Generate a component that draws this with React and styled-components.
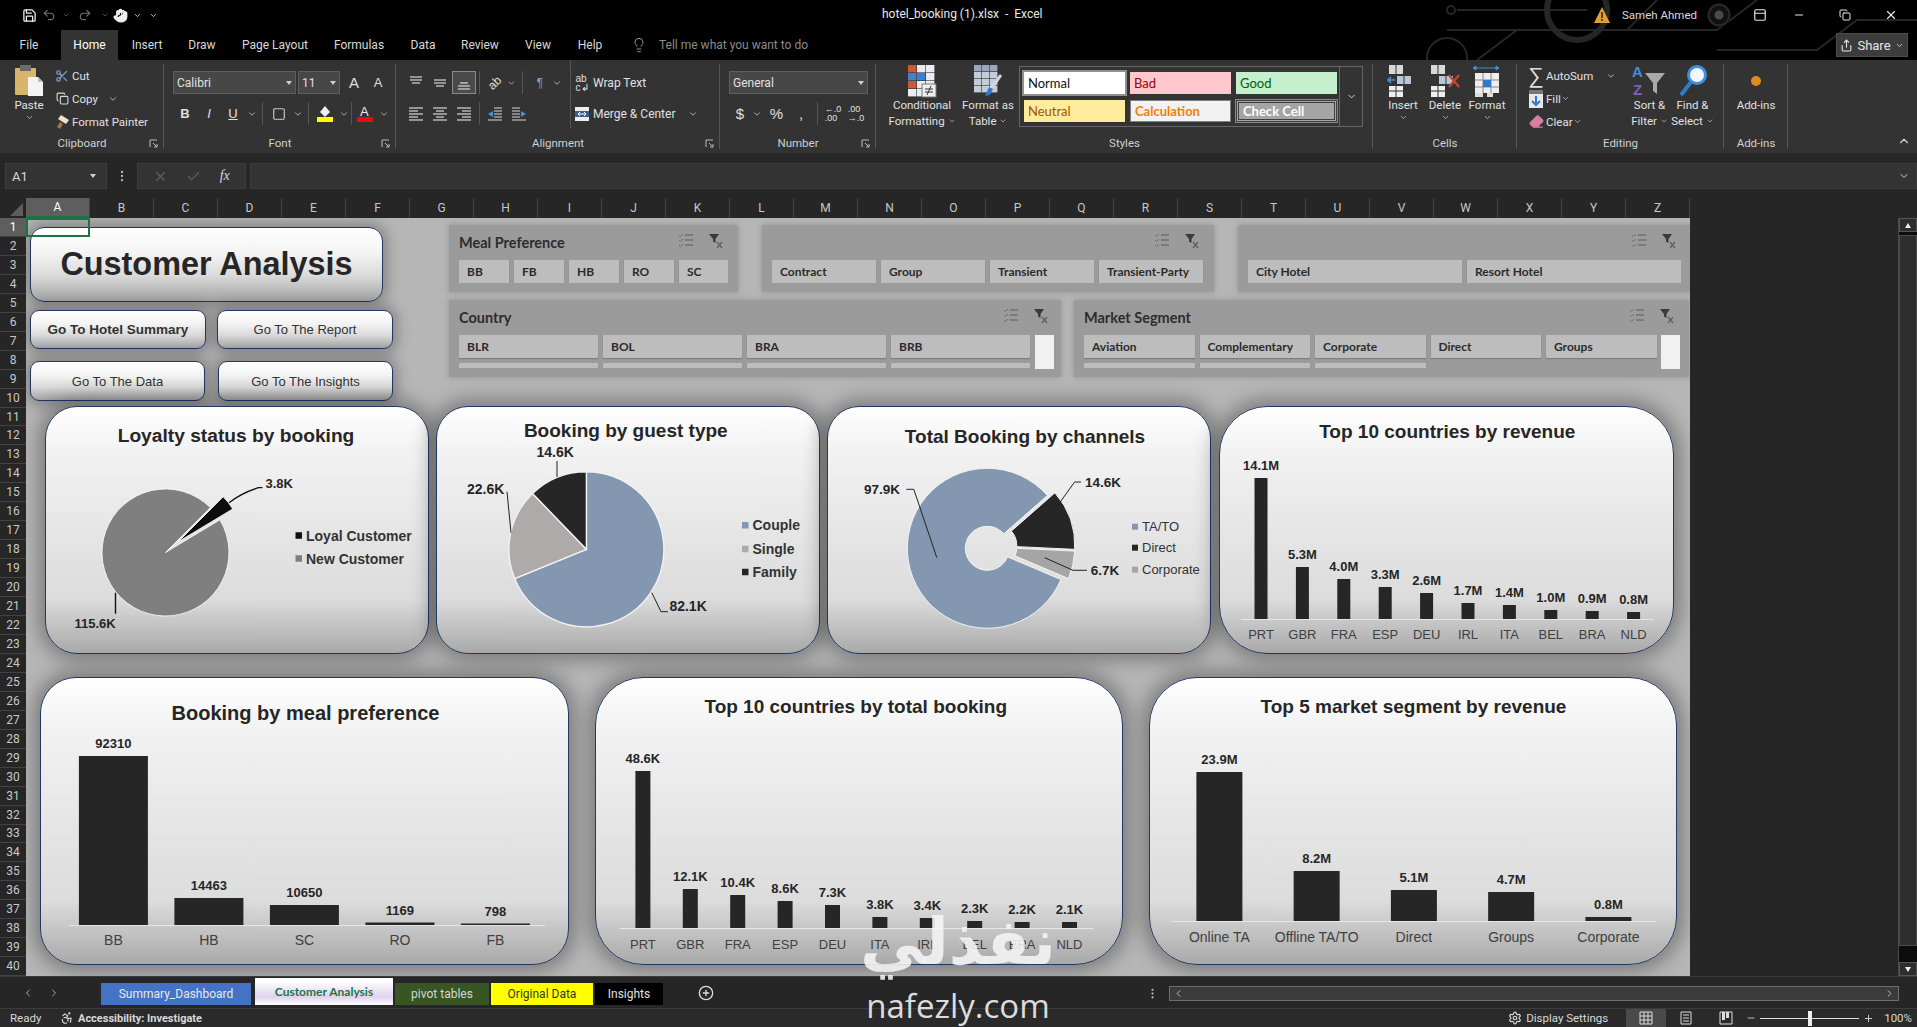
import React from 'react';
import styled, { createGlobalStyle } from 'styled-components';
import {
  ChevronDown, Scissors, Copy, Lightbulb, Save, Undo2, Redo2, X, Check, Minus, Plus,
  Eraser, Hand, Share, Square, ChevronUp, Accessibility, Settings, MoreVertical,
  PanelTop, ArrowDown, ChevronLeft, ChevronRight, CirclePlus,
} from 'lucide-react';

const UI = '"Roboto", "Liberation Sans", sans-serif';
const SLICER = '"Lato", "Liberation Sans", sans-serif';
const CHART = '"Liberation Sans", Arial, sans-serif';

const GlobalStyle = createGlobalStyle`
  html, body { margin: 0; padding: 0; background: #000; overflow: hidden; }
  * { box-sizing: border-box; }
  body { font-family: ${UI}; }
`;

const Window = styled.div`
  position: relative;
  width: 1917px;
  height: 1027px;
  overflow: hidden;
  display: flex;
  flex-direction: column;
  background: #262626;
  color: #d9d9d9;
  font-size: 12px;
`;

/* ---------- title bar + tabs ---------- */
const Header = styled.header`
  position: relative;
  height: 60px;
  background: #000;
`;
const CircuitArt = styled.svg`
  position: absolute;
  right: 0;
  top: 0;
  width: 500px;
  height: 60px;
`;
const TitleRow = styled.div`
  position: relative;
  height: 30px;
  display: flex;
  align-items: center;
`;
const Qat = styled.div`
  display: flex;
  align-items: center;
  padding-left: 21px;
`;
const QatCell = styled.span`
  width: ${p => p.$w}px;
  display: flex;
  align-items: center;
  justify-content: center;
  color: ${p => p.$dim ? '#6e6e6e' : '#f2f2f2'};
`;
const DocTitle = styled.div`
  position: absolute;
  left: 882px;
  top: 7px;
  color: #e8e8e8;
  font-size: 12px;
  white-space: pre;
`;
const TitleRight = styled.div`
  margin-left: auto;
  display: flex;
  align-items: center;
  padding-right: 10px;
`;
const UserName = styled.span`
  color: #d9d9d9;
  margin: 0 10px 0 12px;
  font-size: 11.5px;
`;
const Avatar = styled.span`
  width: 24px;
  height: 24px;
  border-radius: 50%;
  background: radial-gradient(circle at 50% 50%, #4a4a4a 0 4px, #111 5px 9px, #333 10px, #0b0b0b 12px);
  margin-right: 22px;
`;
const WinBtn = styled.span`
  width: ${p => p.$w}px;
  display: flex;
  justify-content: center;
  color: #e8e8e8;
`;
const TabRow = styled.div`
  position: relative;
  height: 30px;
  display: flex;
  align-items: stretch;
`;
const RibbonTab = styled.div`
  width: ${p => p.$w}px;
  margin-left: ${p => p.$ml || 0}px;
  display: flex;
  align-items: center;
  justify-content: center;
  background: ${p => p.$active ? '#333' : 'transparent'};
  color: ${p => p.$active ? '#fff' : '#d9d9d9'};
`;
const TellMe = styled.div`
  display: flex;
  align-items: center;
  gap: 12px;
  margin-left: 17px;
  color: #8a8a8a;
  font-size: 12px;
  & svg { color: #b5b5b5; }
`;
const ShareBtn = styled.div`
  position: absolute;
  left: 1836px;
  top: 3px;
  width: 72px;
  height: 24px;
  background: #3c3c3c;
  border: 1px solid #4c4c4c;
  display: flex;
  align-items: center;
  justify-content: center;
  gap: 4px;
  color: #e6e6e6;
  font-size: 13px;
`;

/* ---------- ribbon ---------- */
const Ribbon = styled.section`
  height: 93px;
  background: #333;
  display: flex;
`;
const Group = styled.div`
  width: ${p => p.$w}px;
  height: 93px;
  flex: none;
  display: flex;
  flex-direction: column;
  position: relative;
  &::after {
    content: '';
    position: absolute;
    right: 0;
    top: 4px;
    bottom: 4px;
    width: 1px;
    background: #555;
  }
`;
const GroupBody = styled.div`
  flex: 1;
  display: flex;
  padding-left: ${p => p.$pl || 0}px;
  padding-top: ${p => p.$pt || 0}px;
`;
const GroupLabel = styled.div`
  height: 18px;
  margin-bottom: 0;
  text-align: center;
  color: #d0d0d0;
  font-size: 11.5px;
  line-height: 16px;
`;
const Launcher = styled.svg`
  position: absolute;
  right: 6px;
  bottom: 5px;
`;
const Big = styled.div`
  width: ${p => p.$w}px;
  flex: none;
  display: flex;
  flex-direction: column;
  align-items: center;
  padding-top: 4px;
  color: #e0e0e0;
  line-height: 16px;
  font-size: 11.5px;
  white-space: nowrap;
`;
const BigIcon = styled.div`
  height: 33px;
  display: flex;
  align-items: center;
  justify-content: center;
`;
const Stack3 = styled.div`
  width: ${p => p.$w}px;
  flex: none;
  padding-top: 4px;
`;
const Row3 = styled.div`
  height: 23px;
  display: flex;
  align-items: center;
  color: #e0e0e0;
  white-space: nowrap;
  font-size: 11.5px;
`;
const Stack2 = styled.div`
  width: ${p => p.$w ? p.$w + 'px' : 'auto'};
  flex: none;
  padding-top: 11px;
  display: flex;
  flex-direction: column;
  gap: 8px;
  border-right: ${p => p.$rule ? '1px solid #555' : 'none'};
  height: ${p => p.$rule ? '68px' : 'auto'};
`;
const Row2 = styled.div`
  height: 23px;
  display: flex;
  align-items: center;
  color: #e0e0e0;
  white-space: nowrap;
  font-size: 12px;
`;
const Cell = styled.span`
  width: ${p => p.$w}px;
  height: 23px;
  flex: none;
  display: flex;
  align-items: center;
  justify-content: center;
  color: #dcdcdc;
  border: ${p => p.$on ? '1px solid #8a8a8a' : 'none'};
  background: ${p => p.$on ? '#4a4a4a' : 'transparent'};
`;
const Rule = styled.span`
  width: ${p => p.$w}px;
  height: 23px;
  flex: none;
  display: flex;
  justify-content: center;
  &::before { content: ''; width: 1px; background: #555; }
`;
const Select = styled.div`
  width: ${p => p.$w}px;
  height: 23px;
  margin-right: 2px;
  flex: none;
  display: flex;
  align-items: center;
  justify-content: space-between;
  padding: 0 3px;
  background: #474747;
  border: 1px solid #5e5e5e;
  color: #e2e2e2;
  font-size: 12px;
`;
const Caret = styled.span`
  width: 0;
  height: 0;
  border-left: 3px solid transparent;
  border-right: 3px solid transparent;
  border-top: 4px solid #cfcfcf;
`;
const FontGlyph = styled.span`
  font-family: ${CHART};
  font-size: ${p => p.$size || 13}px;
  font-weight: ${p => p.$bold ? 700 : 400};
  font-style: ${p => p.$italic ? 'italic' : 'normal'};
  text-decoration: ${p => p.$under ? 'underline' : 'none'};
  color: #e0e0e0;
`;
const Gallery = styled.div`
  width: 321px;
  height: 61px;
  margin-top: 6px;
  flex: none;
  border: 1px solid #666;
  padding: 5px 4px;
  display: grid;
  grid-template-columns: repeat(3, 101px);
  grid-auto-rows: 22px;
  gap: 6px 5px;
`;
const STYLE_CELLS = {
  normal: 'background:#fff;color:#111;outline:2px solid #8f8f8f;',
  bad: 'background:#ffc7ce;color:#9c0006;',
  good: 'background:#c6efce;color:#006100;',
  neutral: 'background:#ffeb9c;color:#9c5700;',
  calc: 'background:#f2f2f2;color:#fa7d00;border:1px solid #7f7f7f;font-weight:700;',
  check: 'background:#a5a5a5;color:#fff;border:3px double #3f3f3f;outline:1px solid #888;font-weight:700;',
};
const StyleCell = styled.div`
  display: flex;
  align-items: center;
  padding-left: 4px;
  font-family: ${SLICER};
  font-size: 13px;
  ${p => STYLE_CELLS[p.$kind]}
`;
const GalleryMore = styled.div`
  width: 23px;
  height: 61px;
  margin-top: 6px;
  flex: none;
  border: 1px solid #666;
  border-left: none;
  display: flex;
  align-items: center;
  justify-content: center;
  color: #ddd;
`;
const RibbonCollapse = styled.div`
  margin-left: auto;
  align-self: flex-end;
  padding: 0 6px 2px 0;
  color: #ccc;
`;

/* ---------- formula bar ---------- */
const FormulaBar = styled.div`
  height: 45px;
  background: #262626;
  padding: 10px 0 9px 5px;
  display: flex;
  align-items: stretch;
`;
const NameBox = styled.div`
  width: 102px;
  background: #333;
  border: 1px solid #3c3c3c;
  display: flex;
  align-items: center;
  justify-content: space-between;
  padding: 0 10px 0 6px;
  color: #d8d8d8;
  font-size: 13px;
`;
const FxDots = styled.div`
  width: 30px;
  display: flex;
  align-items: center;
  justify-content: center;
  color: #b8b8b8;
`;
const FxBox = styled.div`
  width: 109px;
  background: #333;
  border: 1px solid #3c3c3c;
  display: flex;
  align-items: center;
  justify-content: space-around;
  padding: 0 6px;
  color: #5f5f5f;
`;
const FxText = styled.span`
  font-family: "Liberation Serif", serif;
  font-style: italic;
  font-size: 14px;
  color: #d8d8d8;
`;
const FormulaInput = styled.div`
  flex: 1;
  margin-left: 4px;
  background: #333;
  border: 1px solid #3c3c3c;
  display: flex;
  align-items: center;
  justify-content: flex-end;
  padding-right: 6px;
  color: #ccc;
`;

/* ---------- grid ---------- */
const ColHeader = styled.div`
  height: 20px;
  display: flex;
  background: #262626;
`;
const Corner = styled.div`
  width: 26px;
  display: flex;
  justify-content: flex-end;
  align-items: flex-end;
  padding: 0 3px 2px 0;
  &::before {
    content: '';
    border-left: 13px solid transparent;
    border-bottom: 13px solid #5c5c5c;
  }
`;
const ColCell = styled.div`
  width: 64px;
  display: flex;
  align-items: center;
  justify-content: center;
  border-right: 1px solid #424242;
  background: ${p => p.$active ? '#5e5e5e' : 'transparent'};
  color: ${p => p.$active ? '#fff' : '#c8c8c8'};
  border-bottom: ${p => p.$active ? '2px solid #1e7145' : 'none'};
  font-size: 12px;
`;
const GridBody = styled.div`
  height: 758px;
  display: flex;
`;
const RowHeader = styled.div`
  width: 26px;
  flex: none;
  display: flex;
  flex-direction: column;
  background: #262626;
`;
const RowCell = styled.div`
  flex: 1;
  display: flex;
  align-items: center;
  justify-content: center;
  border-bottom: 1px solid #424242;
  background: ${p => p.$active ? '#5e5e5e' : 'transparent'};
  color: ${p => p.$active ? '#fff' : '#c8c8c8'};
  font-size: 12px;
`;
const Sheet = styled.main`
  position: relative;
  width: 1664px;
  flex: none;
  background: #b6b6b6;
  overflow: hidden;
  padding-top: 7px;
`;
const ActiveCell = styled.div`
  position: absolute;
  left: 0;
  top: 0;
  width: 64px;
  height: 19px;
  border: 2px solid #1e7145;
`;
const DarkGutter = styled.div`
  flex: 1;
  background: #262626;
  border-right: 1px solid #4a4a4a;
`;
const VScroll = styled.div`
  width: 18px;
  flex: none;
  display: flex;
  flex-direction: column;
  background: #0c0c0c;
  color: #ddd;
`;
const VArrow = styled.div`
  height: 14px;
  background: #2e2e2e;
  border: 1px solid #555;
  display: flex;
  align-items: center;
  justify-content: center;
  &::before {
    content: '';
    border-left: 3px solid transparent;
    border-right: 3px solid transparent;
    ${p => p.$up ? 'border-bottom: 5px solid #eee;' : 'border-top: 5px solid #eee;'}
  }
`;
const VThumb = styled.div`
  height: 711px;
  margin-top: 3px;
  background: #2e2e2e;
  border: 1px solid #4c4c4c;
`;
const VSpace = styled.div`
  flex: 1;
`;

/* ---------- dashboard top ---------- */
const TopZone = styled.div`
  display: grid;
  grid-template-columns: 363px 1fr;
  column-gap: 56px;
  padding-left: 4px;
  height: 176px;
`;
const NavColumn = styled.div`
  padding-top: 2px;
  display: flex;
  flex-direction: column;
`;
const BEVEL = `
  background: linear-gradient(180deg, #ffffff 0%, #f3f3f3 35%, #dadada 65%, #a2a2a2 100%);
  border: 1.5px solid #1f3864;
  box-shadow: 0 0 14px 4px rgba(0, 0, 0, 0.28);
`;
const TitleCard = styled.div`
  ${BEVEL}
  width: 353px;
  height: 75px;
  border-radius: 14px;
  display: flex;
  align-items: center;
  justify-content: center;
  font-family: ${CHART};
  font-weight: 700;
  font-size: 32.4px;
  color: #262626;
  margin-bottom: 8px;
`;
const NavRow = styled.div`
  display: flex;
  gap: ${p => p.$gap}px;
  margin-bottom: 12px;
`;
const NavBtn = styled.div`
  ${BEVEL}
  width: ${p => p.$w}px;
  height: ${p => p.$h}px;
  border-radius: 9px;
  display: flex;
  align-items: center;
  justify-content: center;
  font-family: ${CHART};
  font-size: ${p => p.$bold ? 13.5 : 13}px;
  font-weight: ${p => p.$bold ? 700 : 400};
  color: #333;
`;
const SlicerZone = styled.div`
  display: flex;
  flex-direction: column;
  gap: 8px;
`;
const SlicerRow = styled.div`
  display: flex;
  gap: ${p => p.$gap}px;
`;
const Slicer = styled.section`
  position: relative;
  width: ${p => p.$w}px;
  height: ${p => p.$h}px;
  background: #9b9b9b;
  padding: 0 10px;
  box-shadow: 0 0 6px rgba(80, 80, 80, 0.35);
`;
const SlicerHead = styled.div`
  height: 35px;
  display: flex;
  align-items: center;
  font-family: ${SLICER};
  font-weight: 700;
  font-size: 14.5px;
  color: #2d2d2d;
`;
const SlicerTools = styled.div`
  position: absolute;
  top: ${p => p.$top}px;
  right: ${p => p.$right}px;
  display: flex;
  gap: ${p => p.$gap}px;
`;
const ItemGrid = styled.div`
  height: ${p => p.$h}px;
  overflow: hidden;
  display: grid;
  grid-template-columns: repeat(${p => p.$cols}, ${p => p.$itemW}px);
  grid-auto-rows: 23px;
  gap: 5px;
`;
const SlicerItem = styled.div`
  background: #bdbdbd;
  box-shadow: 0 1px 1px rgba(90, 90, 90, 0.45);
  display: flex;
  align-items: center;
  padding-left: 8px;
  font-family: ${SLICER};
  font-weight: 700;
  font-size: 12px;
  color: #2b2b2b;
  white-space: nowrap;
`;
const SliceScroll = styled.div`
  position: absolute;
  right: ${p => p.$right}px;
  top: 35px;
  width: 19px;
  height: 34px;
  background: #f1f1f1;
`;

/* ---------- charts ---------- */
const ChartRow = styled.div`
  display: flex;
  gap: ${p => p.$gap}px;
  padding-left: ${p => p.$pl}px;
  margin-bottom: ${p => p.$mb || 0}px;
`;
const Card = styled.article`
  width: ${p => p.$w}px;
  height: ${p => p.$h}px;
  flex: none;
  border-radius: ${p => p.$r}px;
  border: 1.5px solid #1f3864;
  background: linear-gradient(180deg, #ffffff 0%, #f2f2f2 18%, #e4e4e4 55%, #dcdcdc 78%, #a9a9a9 100%);
  box-shadow: 0 0 18px 7px rgba(0, 0, 0, 0.3);
  display: grid;
  overflow: hidden;
`;
const ChartTitle = styled.h3`
  grid-area: 1 / 1;
  justify-self: center;
  align-self: start;
  margin: ${p => p.$top}px 0 0 ${p => p.$dx || 0}px;
  font-family: ${CHART};
  font-weight: 700;
  font-size: ${p => p.$size}px;
  line-height: 24px;
  color: #262626;
  white-space: nowrap;
  z-index: 1;
`;
const Plot = styled.svg`
  grid-area: 1 / 1;
  display: block;
`;
const ChartText = styled.text`
  font-family: ${CHART};
  font-size: ${p => p.$size || 13}px;
  font-weight: ${p => p.$bold ? 700 : 400};
  fill: ${p => p.$fill || '#262626'};
`;

/* ---------- sheet tabs + status bar ---------- */
const SheetTabs = styled.div`
  height: 32px;
  background: #262626;
  display: flex;
  align-items: center;
  position: relative;
  border-top: 1px solid #3c3c3c;
`;
const TabNav = styled.div`
  width: 101px;
  display: flex;
  align-items: center;
  gap: 14px;
  padding-left: 22px;
  color: #a8a8a8;
`;
const SheetTab = styled.div`
  width: ${p => p.$w}px;
  height: ${p => p.$active ? 27 : 22}px;
  margin: ${p => p.$active ? '-2px 2px 0' : '2px 2px 0 0'};
  background: ${p => p.$bg};
  color: ${p => p.$color};
  font-weight: ${p => p.$active ? 700 : 400};
  font-family: ${p => p.$active ? SLICER : UI};
  display: flex;
  align-items: center;
  justify-content: center;
  font-size: 12px;
`;
const AddSheet = styled.div`
  margin-left: 33px;
  display: flex;
  color: #dcdcdc;
`;
const HScrollZone = styled.div`
  position: absolute;
  left: 1146px;
  right: 18px;
  top: 8px;
  height: 16px;
  display: flex;
  align-items: center;
  color: #c8c8c8;
`;
const HScroll = styled.div`
  flex: 1;
  margin-left: 10px;
  height: 15px;
  background: #3b3b3b;
  border: 1px solid #6d6d6d;
  display: flex;
  align-items: center;
  justify-content: space-between;
  padding: 0 3px;
`;
const StatusBar = styled.footer`
  flex: 1;
  background: #2a2a2a;
  border-top: 1px solid #3c3c3c;
  display: flex;
  align-items: center;
  color: #d8d8d8;
  font-size: 11.5px;
`;
const Ready = styled.span`
  margin-left: 10px;
  width: 50px;
`;
const AccessText = styled.span`
  margin-left: 4px;
  font-weight: 700;
  font-size: 11px;
`;
const StatusRight = styled.div`
  margin-left: auto;
  height: 100%;
  display: flex;
  align-items: center;
`;
const ViewBtn = styled.span`
  width: 40px;
  height: 100%;
  display: flex;
  align-items: center;
  justify-content: center;
  background: ${p => p.$on ? '#4a4a4a' : 'transparent'};
`;
const Zoom = styled.div`
  width: 99px;
  height: 1px;
  background: #ddd;
  position: relative;
  margin: 0 4px;
  &::after {
    content: '';
    position: absolute;
    left: 48px;
    top: -7px;
    width: 4px;
    height: 15px;
    background: #eee;
  }
`;
const Watermark = styled.div`
  position: absolute;
  left: 848px;
  top: 898px;
  width: 220px;
  text-align: center;
  color: rgba(245, 245, 245, 0.88);
  pointer-events: none;
`;
const WatermarkAr = styled.div`
  font-family: "DejaVu Sans", sans-serif;
  font-weight: 700;
  font-size: 64px;
  line-height: 88px;
`;
const WatermarkEn = styled.div`
  font-family: "Open Sans", sans-serif;
  font-size: 33px;
  line-height: 40px;
  color: #dcdcdc;
`;

/* ---------- small drawings ---------- */
const Chev = ({ s = 10 }) => <ChevronDown size={s} strokeWidth={2} color="#c8c8c8" />;

const LinesIcon = ({ rows, w = 16, h = 14 }) => (
  <svg width={w} height={h} viewBox="0 0 16 14">
    {rows.map(([x1, x2, y], i) => <path key={i} d={`M${x1} ${y}H${x2}`} stroke="#d8d8d8" strokeWidth="1.2" />)}
  </svg>
);
const ALIGN = {
  top: [[2, 14, 1], [2, 14, 4], [4, 12, 7]],
  mid: [[2, 14, 4], [2, 14, 7], [4, 12, 10]],
  bottom: [[4, 12, 7], [2, 14, 10], [2, 14, 13]],
  left: [[1, 15, 1], [1, 10, 4], [1, 15, 7], [1, 10, 10], [1, 15, 13]],
  center: [[1, 15, 1], [4, 12, 4], [1, 15, 7], [4, 12, 10], [1, 15, 13]],
  right: [[1, 15, 1], [6, 15, 4], [1, 15, 7], [6, 15, 10], [1, 15, 13]],
};
const IndentIcon = ({ flip }) => (
  <svg width="16" height="14" viewBox="0 0 16 14" style={flip ? { transform: 'scaleX(-1)' } : undefined}>
    <path d="M7 1h8M7 4h8M7 7h8M7 10h8M1 13h14" stroke="#d8d8d8" strokeWidth="1.1" />
    <path d="M6 4v6L1 7z" fill="#4a90d9" />
  </svg>
);
const ClipIcon = () => (
  <svg width="30" height="33" viewBox="0 0 30 33">
    <rect x="1" y="4" width="21" height="27" rx="1" fill="#d9b56a" />
    <rect x="6" y="1" width="11" height="6" fill="#6b6b6b" />
    <path d="M14 13h10l5 5v14H14z" fill="#f4f4f4" />
    <path d="M24 13v5h5" fill="#bdbdbd" />
  </svg>
);
const PainterIcon = () => (
  <svg width="16" height="16" viewBox="0 0 16 16">
    <path d="M7 1l8 5-3 4-8-5z" fill="#f0e2c8" />
    <path d="M6 8l3 2-3 5-3-2z" fill="#a8743a" />
  </svg>
);
const CondIcon = () => (
  <svg width="30" height="34" viewBox="0 0 30 34">
    {[0, 1, 2, 3].map(r => [0, 1, 2].map(c => (
      <rect key={`${r}${c}`} x={c * 9 + 1} y={r * 8 + 1} width="8.4" height="7.4"
        fill={c === 0 && r < 3 ? (r === 1 ? '#4a7fc7' : '#c75b3a') : c === 1 && r === 1 ? '#3f7fd0' : '#e9edf2'} />
    )))}
    <rect x="15" y="20" width="14" height="13" fill="#efefef" stroke="#777" />
    <path d="M18 25h8M18 28h8M24 22l-4 9" stroke="#333" fill="none" />
  </svg>
);
const TableIcon = () => (
  <svg width="30" height="34" viewBox="0 0 30 34">
    {[0, 1, 2, 3].map(r => [0, 1, 2].map(c => (
      <rect key={`${r}${c}`} x={c * 8 + 1} y={r * 7 + 1} width="7.4" height="6.4" fill={r === 0 ? '#9aa7bd' : '#c3ccd9'} />
    )))}
    <path d="M27 10l2 2-9 13-4-2z" fill="#d5d5d5" />
    <path d="M16 23l4 2-3 6-5 1z" fill="#2f7ad1" />
  </svg>
);
const CellsIcon = ({ kind }) => (
  <svg width="34" height="34" viewBox="0 0 34 34">
    {kind !== 'format' && (
      <>
        <rect x="3" y="1" width="14" height="9" fill="#d8d8d8" /><path d="M10 1v9" stroke="#333" />
        <rect x="3" y="22" width="14" height="11" fill="#eee" /><path d="M10 22v11M3 27h14" stroke="#333" />
        <rect x="11" y="12" width="14" height="8" fill="#b8c6d8" /><path d="M18 12v8" stroke="#333" />
      </>
    )}
    {kind === 'insert' && <path d="M9 16H2M5 13l-3 3 3 3" stroke="#4a90d9" strokeWidth="1.6" fill="none" />}
    {kind === 'delete' && <path d="M21 11l10 12M31 11L21 23" stroke="#c0452f" strokeWidth="2.4" />}
    {kind === 'format' && (
      <>
        <path d="M3 4h26M3 4l3-2v4zM29 4l-3-2v4z" stroke="#3f8fe0" strokeWidth="1" fill="#3f8fe0" />
        <rect x="5" y="9" width="24" height="20" fill="#eee" />
        <path d="M13 9v20M21 9v20M5 16h24M5 23h24" stroke="#888" />
        <rect x="13" y="16" width="8" height="7" fill="#2f7ad1" />
        <path d="M5 29h8v4H5zM17 29h6v4h-6z" fill="#ddd" />
      </>
    )}
  </svg>
);
const SortIcon = () => (
  <svg width="38" height="34" viewBox="0 0 38 34">
    <text x="1" y="13" fontFamily={CHART} fontSize="15" fill="#3f8fe0" fontWeight="700">A</text>
    <text x="2" y="31" fontFamily={CHART} fontSize="15" fill="#7e62b3" fontWeight="700">Z</text>
    <path d="M14 9h20l-8 10v11l-4-3v-8z" fill="#a9a9a9" />
  </svg>
);
const FindIcon = () => (
  <svg width="30" height="34" viewBox="0 0 30 34">
    <circle cx="19" cy="11" r="8.5" fill="#f2f6fb" stroke="#3f8fe0" strokeWidth="3" />
    <path d="M13 18L3 31" stroke="#2f7ad1" strokeWidth="4" />
  </svg>
);
const FillIcon = () => (
  <svg width="16" height="20" viewBox="0 0 16 20">
    <rect x="1" y="1" width="14" height="18" fill="#e8e8e8" />
    <rect x="1" y="1" width="14" height="4" fill="#777" />
    <path d="M8 7v9M4 12l4 4 4-4" stroke="#2f7ad1" strokeWidth="2" fill="none" />
  </svg>
);
const SlicerIcons = () => (
  <>
    <svg width="16" height="15" viewBox="0 0 16 15">
      <path d="M7 2h8M7 7h8M7 12h8" stroke="#5c5c5c" strokeWidth="1.2" />
      <path d="M1 2l1.5 1.5L5 1M1 7l1.5 1.5L5 6M1 12l1.5 1.5L5 11" stroke="#6f6f6f" fill="none" />
    </svg>
    <svg width="16" height="16" viewBox="0 0 16 16">
      <path d="M1 1h10L7.5 6v4L5 8.5V6z" fill="#3a3a3a" />
      <path d="M9 9l5 6M14 9l-5 6" stroke="#606060" strokeWidth="1.3" />
    </svg>
  </>
);
const LauncherIcon = () => (
  <Launcher width="9" height="9" viewBox="0 0 9 9">
    <path d="M1 8V1h7M4 4l4 4M8 5v3H5" stroke="#bbb" fill="none" />
  </Launcher>
);

/* ---------- pie helpers ---------- */
const polar = (cx, cy, r, a) => [cx + r * Math.sin(a * Math.PI / 180), cy - r * Math.cos(a * Math.PI / 180)];
const slice = (cx, cy, r, r0, a0, a1) => {
  const large = a1 - a0 > 180 ? 1 : 0;
  const [x0, y0] = polar(cx, cy, r, a0);
  const [x1, y1] = polar(cx, cy, r, a1);
  if (!r0) return `M${cx} ${cy}L${x0} ${y0}A${r} ${r} 0 ${large} 1 ${x1} ${y1}Z`;
  const [x2, y2] = polar(cx, cy, r0, a1);
  const [x3, y3] = polar(cx, cy, r0, a0);
  return `M${x0} ${y0}A${r} ${r} 0 ${large} 1 ${x1} ${y1}L${x2} ${y2}A${r0} ${r0} 0 ${large} 0 ${x3} ${y3}Z`;
};

const Legend = ({ x, items, bold, size, swatch = 6.5 }) => items.map(it => (
  <g key={it.text}>
    <rect x={x} y={it.y - swatch / 2} width={swatch} height={swatch} fill={it.color} />
    <ChartText x={x + swatch + 4} y={it.y + size * 0.36} $bold={bold} $size={size} $fill="#333">{it.text}</ChartText>
  </g>
));

const LoyaltyPlot = () => (
  <Plot width="384" height="248" viewBox="44.5 406 384 248">
    <path d={slice(164, 551.5, 63.5, 0, 59, 405)} fill="#7f7f7f" stroke="#fff" strokeWidth="0.8" />
    <path d={slice(176.8, 540.7, 63.5, 0, 45, 59)} fill="#0d0d0d" stroke="#fff" strokeWidth="0.8" />
    <path d="M227.6 501.7 Q240 492 257 486.7H261" stroke="#111" strokeWidth="1.3" fill="none" />
    <path d="M114 591.7V612.7" stroke="#111" strokeWidth="1.4" />
    <ChartText x="264" y="487" $bold $size="13">3.8K</ChartText>
    <ChartText x="73" y="626.5" $bold $size="13">115.6K</ChartText>
    <Legend x={294} bold size={14} items={[
      { text: 'Loyal Customer', y: 534.5, color: '#111' },
      { text: 'New Customer', y: 557.5, color: '#7f7f7f' },
    ]} />
  </Plot>
);

const GuestPlot = () => (
  <Plot width="383.5" height="248" viewBox="436 406 383.5 248">
    <path d={slice(585.4, 548.3, 77.5, 0, 0, 247.8)} fill="#8497b0" stroke="#f2f2f2" strokeWidth="1.4" />
    <path d={slice(585.4, 548.3, 77.5, 0, 247.8, 316)} fill="#aeaaaa" stroke="#f2f2f2" strokeWidth="1.4" />
    <path d={slice(585.4, 548.3, 77.5, 0, 316, 360)} fill="#262626" stroke="#f2f2f2" strokeWidth="1.4" />
    <path d="M556 460V476M506 490.7L510 531.7M650.8 591.7L660 610.7H667" stroke="#222" strokeWidth="1" fill="none" />
    <ChartText x="535.5" y="456" $bold $size="14">14.6K</ChartText>
    <ChartText x="466" y="493" $bold $size="14">22.6K</ChartText>
    <ChartText x="668.4" y="610" $bold $size="14">82.1K</ChartText>
    <Legend x={741} bold size={14} items={[
      { text: 'Couple', y: 524.3, color: '#8497b0' },
      { text: 'Single', y: 548, color: '#aeaaaa' },
      { text: 'Family', y: 571, color: '#262626' },
    ]} />
  </Plot>
);

const ChannelPlot = () => (
  <Plot width="384" height="248" viewBox="826 406 384 248">
    <path d={slice(985.3, 547.3, 80, 22, 113, 408.7)} fill="#8497b0" stroke="#f2f2f2" strokeWidth="1" />
    <path d={slice(992.8, 544.6, 80, 22, 48.7, 92.7)} fill="#262626" stroke="#f2f2f2" strokeWidth="1" />
    <path d={slice(992.8, 546.3, 80, 22, 92.7, 113)} fill="#a5a5a5" stroke="#f2f2f2" strokeWidth="1" />
    <path d="M904.4 488.3H911.8L934.8 556.7M1079 481H1072.6L1041 525M1085 569.3H1071L1042.7 556.7" stroke="#222" strokeWidth="1" fill="none" />
    <ChartText x="862" y="493" $bold $size="13.5">97.9K</ChartText>
    <ChartText x="1083" y="486" $bold $size="13.5">14.6K</ChartText>
    <ChartText x="1088.7" y="574" $bold $size="13.5">6.7K</ChartText>
    <Legend x={1130} size={13} swatch={6} items={[
      { text: 'TA/TO', y: 525.7, color: '#8497b0' },
      { text: 'Direct', y: 546.7, color: '#262626' },
      { text: 'Corporate', y: 568.7, color: '#a5a5a5' },
    ]} />
  </Plot>
);

const BarPlot = ({ box, data, start, pitch, barW, base, axis, catY, gap = 12.5, catSize = 13 }) => (
  <Plot width={box[2]} height={box[3]} viewBox={box.join(' ')}>
    <path d={`M${axis[0]} ${base + 0.5}H${axis[1]}`} stroke="#e6e6e6" strokeWidth="1" />
    {data.map(([cat, h, text], i) => {
      const cx = start + pitch * i;
      return (
        <g key={cat}>
          <rect x={cx - barW / 2} y={base - h} width={barW} height={h} fill="#262626" />
          <ChartText x={cx} y={base - h - gap + 4.5} textAnchor="middle" $bold $size="13">{text}</ChartText>
          <ChartText x={cx} y={catY + 4.5} textAnchor="middle" $size={catSize} $fill="#404040">{cat}</ChartText>
        </g>
      );
    })}
  </Plot>
);

const REVENUE = [['PRT', 141, '14.1M'], ['GBR', 52, '5.3M'], ['FRA', 40, '4.0M'], ['ESP', 32, '3.3M'], ['DEU', 26, '2.6M'], ['IRL', 16, '1.7M'], ['ITA', 14, '1.4M'], ['BEL', 9, '1.0M'], ['BRA', 8, '0.9M'], ['NLD', 7, '0.8M']];
const MEALS = [['BB', 169, '92310'], ['HB', 27, '14463'], ['SC', 20, '10650'], ['RO', 2.5, '1169'], ['FB', 1.5, '798']];
const BOOKINGS = [['PRT', 157, '48.6K'], ['GBR', 39, '12.1K'], ['FRA', 33, '10.4K'], ['ESP', 27, '8.6K'], ['DEU', 23, '7.3K'], ['ITA', 11, '3.8K'], ['IRL', 10, '3.4K'], ['BEL', 7, '2.3K'], ['BRA', 6, '2.2K'], ['NLD', 6, '2.1K']];
const SEGMENTS = [['Online TA', 149, '23.9M'], ['Offline TA/TO', 50, '8.2M'], ['Direct', 31, '5.1M'], ['Groups', 29, '4.7M'], ['Corporate', 4, '0.8M']];

const COLUMNS = 'ABCDEFGHIJKLMNOPQRSTUVWXYZ'.split('');
const ROWS = Array.from({ length: 40 }, (_, i) => i + 1);

const App = () => (
  <Window>
    <GlobalStyle />
    <Header>
      <CircuitArt viewBox="0 0 500 60">
        <g stroke="#262626" strokeWidth="2" fill="none">
          <circle cx="30" cy="58" r="20" />
          <path d="M40 10H170M30 30H90M90 30H210L240 0M60 60L100 30H300L340 0M300 50H400L440 20H500" />
          <circle cx="160" cy="10" r="30" strokeWidth="6" />
          <circle cx="34" cy="10" r="4" />
        </g>
      </CircuitArt>
      <TitleRow>
        <Qat>
          <QatCell $w={17}><Save size={15} /></QatCell>
          <QatCell $w={22} $dim><Undo2 size={14} /></QatCell>
          <QatCell $w={12} $dim><ChevronDown size={8} /></QatCell>
          <QatCell $w={26} $dim><Redo2 size={14} /></QatCell>
          <QatCell $w={14} $dim><ChevronDown size={8} /></QatCell>
          <QatCell $w={16}><Hand size={15} fill="#eee" /></QatCell>
          <QatCell $w={18}><ChevronDown size={9} /></QatCell>
          <QatCell $w={14}><ChevronDown size={9} /></QatCell>
        </Qat>
        <DocTitle>hotel_booking (1).xlsx  -  Excel</DocTitle>
        <TitleRight>
          <svg width="16" height="16" viewBox="0 0 16 16"><path d="M8 0l8 16H0z" fill="#e0a030" /><path d="M8 5v6M8 12v2" stroke="#222" strokeWidth="1.5" /></svg>
          <UserName>Sameh Ahmed</UserName>
          <Avatar />
          <WinBtn $w={14}><PanelTop size={14} /></WinBtn>
          <WinBtn $w={32} style={{ marginLeft: 16 }}><Minus size={12} /></WinBtn>
          <WinBtn $w={60}><Copy size={12} /></WinBtn>
          <WinBtn $w={32}><X size={14} /></WinBtn>
        </TitleRight>
      </TitleRow>
      <TabRow>
        <RibbonTab $w={58}>File</RibbonTab>
        <RibbonTab $w={57} $ml={3} $active>Home</RibbonTab>
        <RibbonTab $w={58}>Insert</RibbonTab>
        <RibbonTab $w={52}>Draw</RibbonTab>
        <RibbonTab $w={94}>Page Layout</RibbonTab>
        <RibbonTab $w={74}>Formulas</RibbonTab>
        <RibbonTab $w={54}>Data</RibbonTab>
        <RibbonTab $w={60}>Review</RibbonTab>
        <RibbonTab $w={56}>View</RibbonTab>
        <RibbonTab $w={48}>Help</RibbonTab>
        <TellMe><Lightbulb size={16} strokeWidth={1.2} />Tell me what you want to do</TellMe>
        <ShareBtn><Share size={13} />Share<ChevronDown size={9} /></ShareBtn>
      </TabRow>
    </Header>

    <Ribbon>
      <Group $w={164}>
        <GroupBody $pl={6}>
          <Big $w={46}><BigIcon><ClipIcon /></BigIcon>Paste<Chev s={9} /></Big>
          <Stack3 $w={104}>
            <Row3><Cell $w={20}><Scissors size={14} color="#7fa8d8" /></Cell>Cut</Row3>
            <Row3><Cell $w={20}><Copy size={13} color="#d8d8d8" /></Cell>Copy<Cell $w={30}><Chev /></Cell></Row3>
            <Row3><Cell $w={20}><PainterIcon /></Cell>Format Painter</Row3>
          </Stack3>
        </GroupBody>
        <GroupLabel>Clipboard</GroupLabel>
        <LauncherIcon />
      </Group>

      <Group $w={232}>
        <GroupBody $pl={9}>
          <Stack2>
            <Row2>
              <Select $w={123}>Calibri<Caret /></Select>
              <Select $w={42}>11<Caret /></Select>
              <Cell $w={24}><FontGlyph $size={15}>A</FontGlyph></Cell>
              <Cell $w={24}><FontGlyph $size={13}>A</FontGlyph></Cell>
            </Row2>
            <Row2>
              <Cell $w={24}><FontGlyph $bold>B</FontGlyph></Cell>
              <Cell $w={24}><FontGlyph $italic>I</FontGlyph></Cell>
              <Cell $w={24}><FontGlyph $under>U</FontGlyph></Cell>
              <Cell $w={13}><Chev /></Cell>
              <Rule $w={9} />
              <Cell $w={24}><Square size={14} strokeDasharray="2 2" /></Cell>
              <Cell $w={13}><Chev /></Cell>
              <Rule $w={9} />
              <Cell $w={24}>
                <svg width="16" height="17" viewBox="0 0 16 17"><path d="M8 1l5 6-5 5-5-5z" fill="#eee" /><rect y="12" width="16" height="5" fill="#ffff00" /></svg>
              </Cell>
              <Cell $w={13}><Chev /></Cell>
              <Rule $w={3} />
              <Cell $w={24}>
                <svg width="16" height="17" viewBox="0 0 16 17"><text x="3" y="11" fontFamily={CHART} fontSize="13" fill="#e8e8e8">A</text><rect y="12" width="16" height="5" fill="#e01010" /></svg>
              </Cell>
              <Cell $w={13}><Chev /></Cell>
            </Row2>
          </Stack2>
        </GroupBody>
        <GroupLabel>Font</GroupLabel>
        <LauncherIcon />
      </Group>

      <Group $w={324}>
        <GroupBody $pl={8}>
          <Stack2 $w={167} $rule>
            <Row2>
              <Cell $w={24}><LinesIcon rows={ALIGN.top} /></Cell>
              <Cell $w={24}><LinesIcon rows={ALIGN.mid} /></Cell>
              <Cell $w={24} $on><LinesIcon rows={ALIGN.bottom} /></Cell>
              <Rule $w={7} />
              <Cell $w={24}><FontGlyph $size={12} style={{ transform: 'rotate(-45deg)' }}>ab</FontGlyph></Cell>
              <Cell $w={9}><Chev /></Cell>
              <Rule $w={12} />
              <Cell $w={24}><FontGlyph $size={12} style={{ color: '#6fa4dc' }}>¶</FontGlyph></Cell>
              <Cell $w={10}><Chev /></Cell>
            </Row2>
            <Row2>
              <Cell $w={24}><LinesIcon rows={ALIGN.left} /></Cell>
              <Cell $w={24}><LinesIcon rows={ALIGN.center} /></Cell>
              <Cell $w={24}><LinesIcon rows={ALIGN.right} /></Cell>
              <Rule $w={7} />
              <Cell $w={24}><IndentIcon /></Cell>
              <Cell $w={24}><IndentIcon flip /></Cell>
            </Row2>
          </Stack2>
          <Stack2>
            <Row2>
              <Cell $w={22}><FontGlyph $size={10} style={{ lineHeight: '9px' }}>ab<br />c↲</FontGlyph></Cell>
              Wrap Text
            </Row2>
            <Row2>
              <Cell $w={22}>
                <svg width="16" height="16" viewBox="0 0 16 16"><rect x="1" y="1" width="14" height="14" fill="#eee" /><rect x="1" y="5" width="14" height="6" fill="#3c5f8a" /><path d="M4 8h8M4 8l2-2M4 8l2 2M12 8l-2-2M12 8l-2 2" stroke="#fff" /></svg>
              </Cell>
              Merge &amp; Center
              <Cell $w={36}><Chev /></Cell>
            </Row2>
          </Stack2>
        </GroupBody>
        <GroupLabel>Alignment</GroupLabel>
        <LauncherIcon />
      </Group>

      <Group $w={156}>
        <GroupBody $pl={9}>
          <Stack2>
            <Row2><Select $w={139}>General<Caret /></Select></Row2>
            <Row2>
              <Cell $w={22}><FontGlyph $size={15}>$</FontGlyph></Cell>
              <Cell $w={12}><Chev /></Cell>
              <Cell $w={27}><FontGlyph $size={15}>%</FontGlyph></Cell>
              <Cell $w={22}><FontGlyph $size={15}>,</FontGlyph></Cell>
              <Rule $w={10} />
              <Cell $w={22}><FontGlyph $size={9} style={{ lineHeight: '9px' }}>←.0<br />.00</FontGlyph></Cell>
              <Cell $w={24}><FontGlyph $size={9} style={{ lineHeight: '9px' }}>.00<br />→.0</FontGlyph></Cell>
            </Row2>
          </Stack2>
        </GroupBody>
        <GroupLabel>Number</GroupLabel>
        <LauncherIcon />
      </Group>

      <Group $w={497}>
        <GroupBody $pl={11}>
          <Big $w={70}><BigIcon><CondIcon /></BigIcon>Conditional<span>Formatting <Chev s={8} /></span></Big>
          <Big $w={62}><BigIcon><TableIcon /></BigIcon>Format as<span>Table <Chev s={8} /></span></Big>
          <Gallery>
            <StyleCell $kind="normal">Normal</StyleCell>
            <StyleCell $kind="bad">Bad</StyleCell>
            <StyleCell $kind="good">Good</StyleCell>
            <StyleCell $kind="neutral">Neutral</StyleCell>
            <StyleCell $kind="calc">Calculation</StyleCell>
            <StyleCell $kind="check">Check Cell</StyleCell>
          </Gallery>
          <GalleryMore><ChevronDown size={11} /></GalleryMore>
        </GroupBody>
        <GroupLabel>Styles</GroupLabel>
      </Group>

      <Group $w={144}>
        <GroupBody $pl={9}>
          <Big $w={42}><BigIcon><CellsIcon kind="insert" /></BigIcon>Insert<Chev s={9} /></Big>
          <Big $w={42}><BigIcon><CellsIcon kind="delete" /></BigIcon>Delete<Chev s={9} /></Big>
          <Big $w={42}><BigIcon><CellsIcon kind="format" /></BigIcon>Format<Chev s={9} /></Big>
        </GroupBody>
        <GroupLabel>Cells</GroupLabel>
      </Group>

      <Group $w={207}>
        <GroupBody $pl={9}>
          <Stack3 $w={102}>
            <Row3><Cell $w={20}><FontGlyph $size={22} style={{ color: '#ddd' }}>∑</FontGlyph></Cell>AutoSum<Cell $w={36}><Chev /></Cell></Row3>
            <Row3><Cell $w={20}><FillIcon /></Cell>Fill<Chev s={9} /></Row3>
            <Row3><Cell $w={20}><Eraser size={15} color="#d77fa0" fill="#d77fa0" /></Cell>Clear<Chev s={9} /></Row3>
          </Stack3>
          <Big $w={43}><BigIcon><SortIcon /></BigIcon>Sort &amp;<span>Filter <Chev s={8} /></span></Big>
          <Big $w={43}><BigIcon><FindIcon /></BigIcon>Find &amp;<span>Select <Chev s={8} /></span></Big>
        </GroupBody>
        <GroupLabel>Editing</GroupLabel>
      </Group>

      <Group $w={64}>
        <GroupBody>
          <Big $w={64}>
            <BigIcon><svg width="12" height="12" viewBox="0 0 12 12"><circle cx="6" cy="6" r="5" fill="#e08a1e" /></svg></BigIcon>
            Add-ins
          </Big>
        </GroupBody>
        <GroupLabel>Add-ins</GroupLabel>
      </Group>
      <RibbonCollapse><ChevronUp size={14} /></RibbonCollapse>
    </Ribbon>

    <FormulaBar>
      <NameBox>A1<Caret /></NameBox>
      <FxDots><MoreVertical size={14} /></FxDots>
      <FxBox><X size={15} /><Check size={15} /><FxText>fx</FxText></FxBox>
      <FormulaInput><ChevronDown size={12} /></FormulaInput>
    </FormulaBar>

    <ColHeader>
      <Corner />
      {COLUMNS.map((c, i) => <ColCell key={c} $active={i === 0}>{c}</ColCell>)}
    </ColHeader>

    <GridBody>
      <RowHeader>
        {ROWS.map(r => <RowCell key={r} $active={r === 1}>{r}</RowCell>)}
      </RowHeader>
      <Sheet>
        <ActiveCell />
        <TopZone>
          <NavColumn>
            <TitleCard>Customer Analysis</TitleCard>
            <NavRow $gap={11}>
              <NavBtn $w={176} $h={39} $bold>Go To Hotel Summary</NavBtn>
              <NavBtn $w={176} $h={39}>Go To The Report</NavBtn>
            </NavRow>
            <NavRow $gap={13}>
              <NavBtn $w={175} $h={40}>Go To The Data</NavBtn>
              <NavBtn $w={175} $h={40}>Go To The Insights</NavBtn>
            </NavRow>
          </NavColumn>
          <SlicerZone>
            <SlicerRow $gap={24}>
              <Slicer $w={289} $h={67}>
                <SlicerHead>Meal Preference</SlicerHead>
                <SlicerTools $top={8} $right={14} $gap={14}><SlicerIcons /></SlicerTools>
                <ItemGrid $cols={5} $itemW={50} $h={23}>
                  {['BB', 'FB', 'HB', 'RO', 'SC'].map(t => <SlicerItem key={t}>{t}</SlicerItem>)}
                </ItemGrid>
              </Slicer>
              <Slicer $w={452} $h={67}>
                <SlicerHead />
                <SlicerTools $top={8} $right={14} $gap={14}><SlicerIcons /></SlicerTools>
                <ItemGrid $cols={4} $itemW={104} $h={23}>
                  {['Contract', 'Group', 'Transient', 'Transient-Party'].map(t => <SlicerItem key={t}>{t}</SlicerItem>)}
                </ItemGrid>
              </Slicer>
              <Slicer $w={453} $h={67}>
                <SlicerHead />
                <SlicerTools $top={8} $right={14} $gap={14}><SlicerIcons /></SlicerTools>
                <ItemGrid $cols={2} $itemW={214} $h={23}>
                  {['City Hotel', 'Resort Hotel'].map(t => <SlicerItem key={t}>{t}</SlicerItem>)}
                </ItemGrid>
              </Slicer>
            </SlicerRow>
            <SlicerRow $gap={13}>
              <Slicer $w={612} $h={77}>
                <SlicerHead>Country</SlicerHead>
                <SlicerTools $top={8} $right={12} $gap={14}><SlicerIcons /></SlicerTools>
                <ItemGrid $cols={4} $itemW={139} $h={33}>
                  {['BLR', 'BOL', 'BRA', 'BRB'].map(t => <SlicerItem key={t}>{t}</SlicerItem>)}
                  {[0, 1, 2, 3].map(i => <SlicerItem key={i} />)}
                </ItemGrid>
                <SliceScroll $right={7} />
              </Slicer>
              <Slicer $w={615} $h={77}>
                <SlicerHead>Market Segment</SlicerHead>
                <SlicerTools $top={8} $right={14} $gap={14}><SlicerIcons /></SlicerTools>
                <ItemGrid $cols={5} $itemW={110.5} $h={33}>
                  {['Aviation', 'Complementary', 'Corporate', 'Direct', 'Groups'].map(t => <SlicerItem key={t}>{t}</SlicerItem>)}
                  {[0, 1, 2].map(i => <SlicerItem key={i} />)}
                </ItemGrid>
                <SliceScroll $right={9} />
              </Slicer>
            </SlicerRow>
          </SlicerZone>
        </TopZone>

        <ChartRow $pl={18.5} $gap={7.5} $mb={23} style={{ marginTop: 5 }}>
          <Card $w={384} $h={248} $r={32}>
            <ChartTitle $top={17} $size={19.2} $dx={-3}>Loyalty status by booking</ChartTitle>
            <LoyaltyPlot />
          </Card>
          <Card $w={383.5} $h={248} $r={32}>
            <ChartTitle $top={12} $size={19} $dx={-6}>Booking by guest type</ChartTitle>
            <GuestPlot />
          </Card>
          <Card $w={384} $h={248} $r={32}>
            <ChartTitle $top={18} $size={19} $dx={10}>Total Booking by channels</ChartTitle>
            <ChannelPlot />
          </Card>
          <Card $w={455.6} $h={248} $r={48}>
            <ChartTitle $top={13} $size={19}>Top 10 countries by revenue</ChartTitle>
            <BarPlot box={[1218, 406, 455.6, 248]} data={REVENUE} start={1259} pitch={41.4} barW={13} base={618} axis={[1239, 1652]} catY={634} />
          </Card>
        </ChartRow>
        <ChartRow $pl={14} $gap={25.5}>
          <Card $w={529} $h={288} $r={36}>
            <ChartTitle $top={23} $size={20}>Booking by meal preference</ChartTitle>
            <BarPlot box={[40, 677, 529, 288]} data={MEALS} start={112.4} pitch={95.5} barW={69} base={924} axis={[68, 544]} catY={939} catSize={14} />
          </Card>
          <Card $w={528.5} $h={288} $r={48}>
            <ChartTitle $top={17} $size={19} $dx={-8}>Top 10 countries by total booking</ChartTitle>
            <BarPlot box={[594.5, 677, 528.5, 288]} data={BOOKINGS} start={641.4} pitch={47.4} barW={15} base={927} axis={[618, 1092]} catY={943} />
          </Card>
          <Card $w={528} $h={288} $r={48}>
            <ChartTitle $top={17} $size={19}>Top 5 market segment by revenue</ChartTitle>
            <BarPlot box={[1149, 677, 528, 288]} data={SEGMENTS} start={1218.4} pitch={97.25} barW={46} base={920} axis={[1170, 1655]} catY={936} catSize={14} />
          </Card>
        </ChartRow>
      </Sheet>
      <DarkGutter />
      <VScroll>
        <VArrow $up />
        <VThumb />
        <VSpace />
        <VArrow />
      </VScroll>
    </GridBody>

    <SheetTabs>
      <TabNav><ChevronLeft size={12} /><ChevronRight size={12} /></TabNav>
      <SheetTab $w={150} $bg="#4472c4" $color="#e4e8f0">Summary_Dashboard</SheetTab>
      <SheetTab $w={138} $active $bg="linear-gradient(180deg,#fff 0%,#fff 12%,#e0d2ec 70%,#fff 100%)" $color="#217346">Customer Analysis</SheetTab>
      <SheetTab $w={94} $bg="#375623" $color="#d6d6d6">pivot tables</SheetTab>
      <SheetTab $w={102} $bg="#ffff00" $color="#333">Original Data</SheetTab>
      <SheetTab $w={68} $bg="#000" $color="#e0e0e0">Insights</SheetTab>
      <AddSheet><CirclePlus size={16} /></AddSheet>
      <HScrollZone>
        <MoreVertical size={13} />
        <HScroll><ChevronLeft size={11} /><ChevronRight size={11} /></HScroll>
      </HScrollZone>
    </SheetTabs>

    <StatusBar>
      <Ready>Ready</Ready>
      <Accessibility size={14} />
      <AccessText>Accessibility: Investigate</AccessText>
      <StatusRight>
        <Settings size={14} />
        <span style={{ margin: '0 18px 0 4px' }}>Display Settings</span>
        <ViewBtn $on>
          <svg width="14" height="14" viewBox="0 0 14 14"><path d="M1 1h12v12H1zM5 1v12M9 1v12M1 5h12M1 9h12" stroke="#ddd" fill="none" /></svg>
        </ViewBtn>
        <ViewBtn>
          <svg width="14" height="14" viewBox="0 0 14 14"><path d="M2 1h10v12H2zM4 4h6M4 7h6M4 10h6" stroke="#ddd" fill="none" /></svg>
        </ViewBtn>
        <ViewBtn>
          <svg width="14" height="14" viewBox="0 0 14 14"><path d="M1 1h12v12H1z" stroke="#ddd" fill="none" /><path d="M3 1h3v8H3zM7 1h3v6H7z" fill="#ddd" /></svg>
        </ViewBtn>
        <Minus size={10} />
        <Zoom />
        <Plus size={11} />
        <span style={{ margin: '0 5px 0 10px' }}>100%</span>
      </StatusRight>
    </StatusBar>

    <Watermark>
      <WatermarkAr>نفذلي</WatermarkAr>
      <WatermarkEn>nafezly.com</WatermarkEn>
    </Watermark>
  </Window>
);

export default App;
